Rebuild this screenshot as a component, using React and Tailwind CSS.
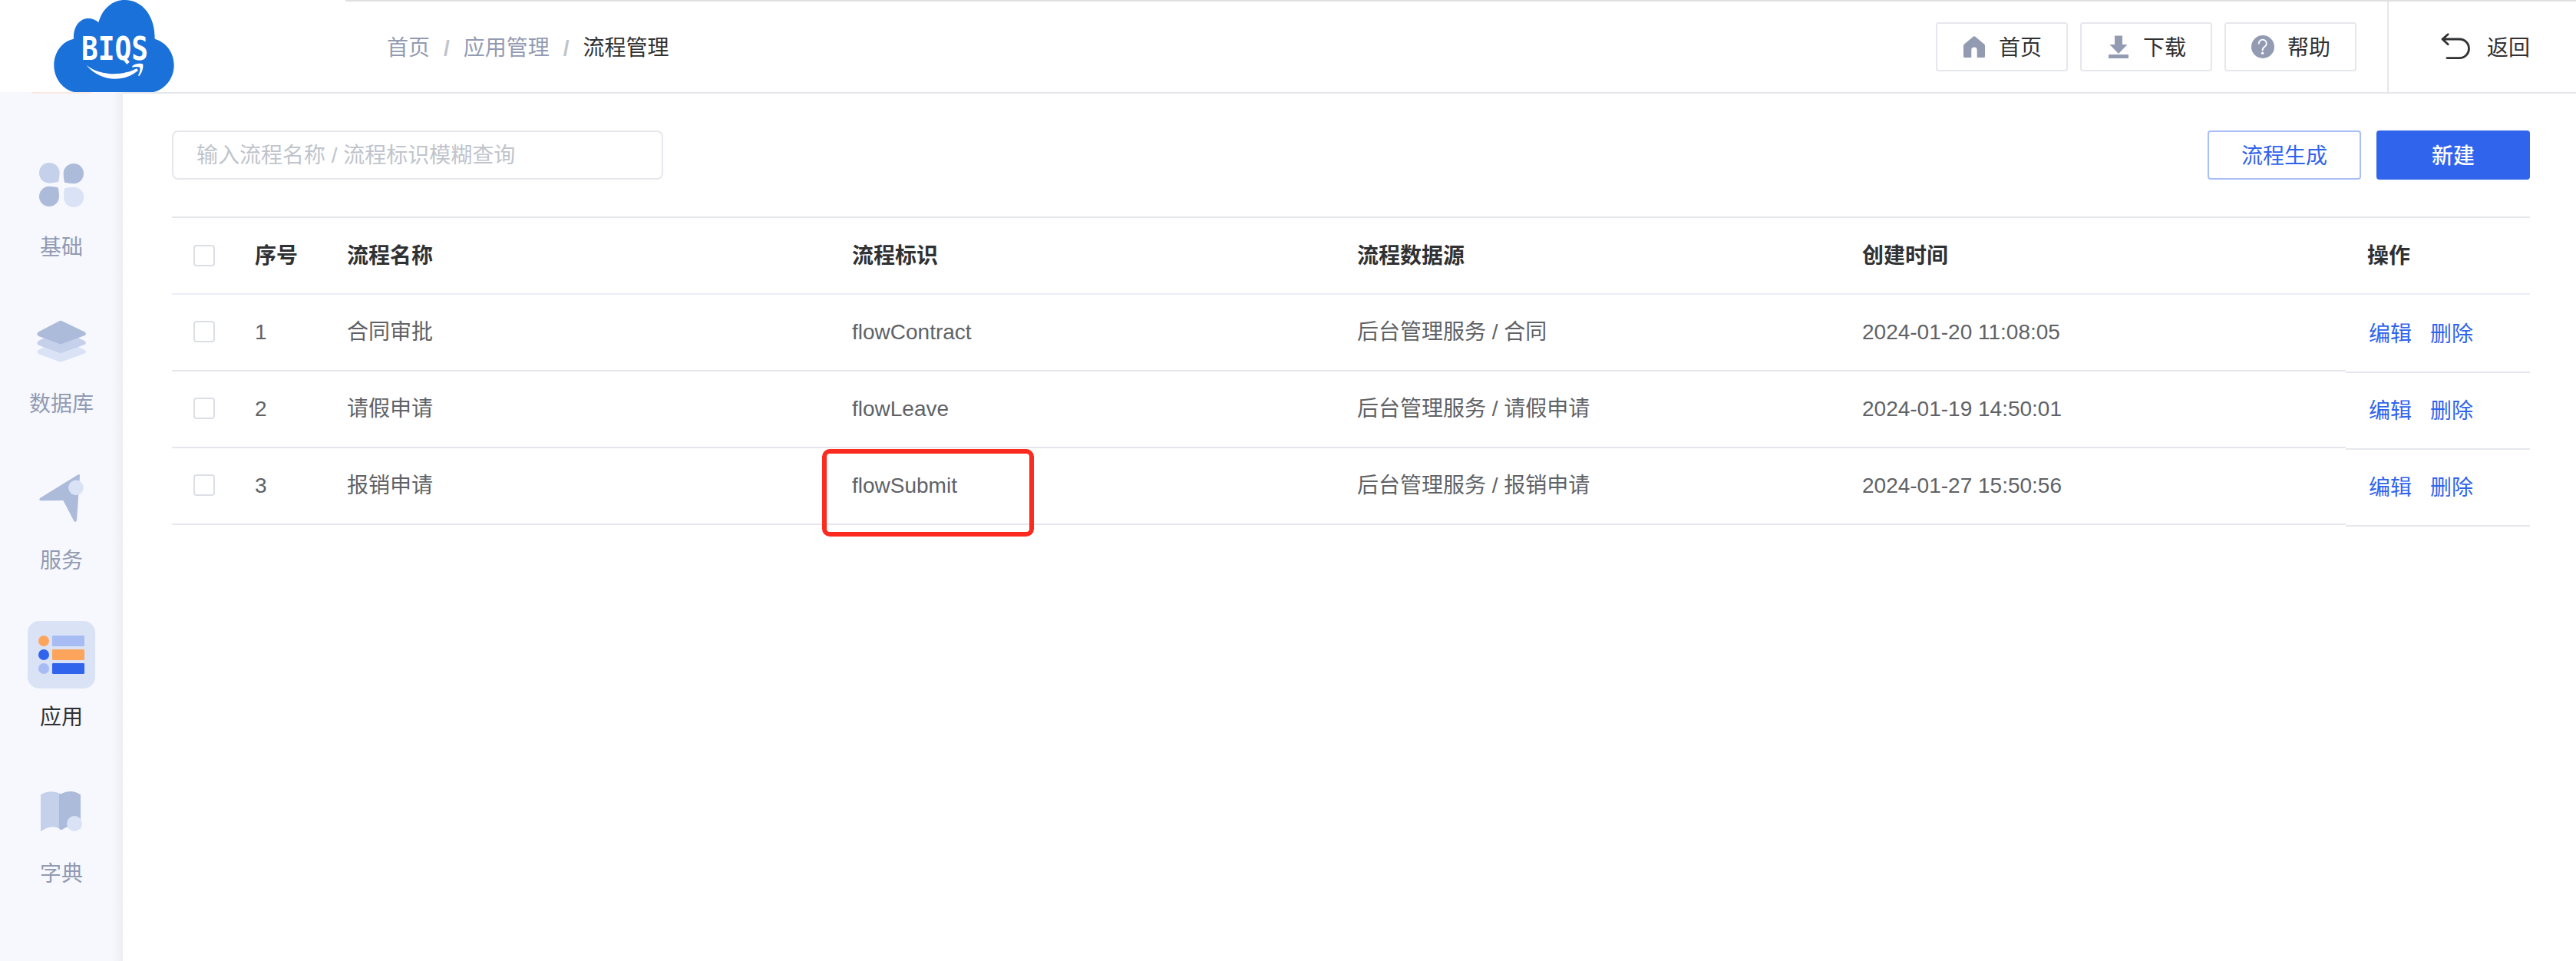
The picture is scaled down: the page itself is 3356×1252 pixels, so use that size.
import React, { useState } from "react";

const menus = [
  { key: "base", label: "基础", icon: BaseIcon },
  { key: "database", label: "数据库", icon: DatabaseIcon },
  { key: "service", label: "服务", icon: ServiceIcon },
  { key: "app", label: "应用", icon: AppIcon },
  { key: "dict", label: "字典", icon: DictIcon },
];

const flows = [
  { id: 1, name: "合同审批", code: "flowContract", source: "后台管理服务 / 合同", time: "2024-01-20 11:08:05" },
  { id: 2, name: "请假申请", code: "flowLeave", source: "后台管理服务 / 请假申请", time: "2024-01-19 14:50:01" },
  { id: 3, name: "报销申请", code: "flowSubmit", source: "后台管理服务 / 报销申请", time: "2024-01-27 15:50:56", marked: true },
];

function Logo() {
  return (
    <svg className="block h-[120px] w-[230px] overflow-visible" viewBox="0 0 230 120">
      <g transform="scale(0.33333)" fill="#fff">
        <path
          fill="#1971d9"
          d="M290 360C245 350 211 306 211 255C211 204 243 161 288 152C286 103 312 72 345 72C361 72 375 78 385 88C401 32 440 0 488 0C556 0 606 62 605 152C650 165 680 206 680 255C680 306 645 350 600 360Z"
        />
        <path d="M337 254C392 297 478 298 534 268L540 275C484 324 392 320 337 254Z" />
        <path d="M517 258C530 247 550 247 559 251C561 268 553 288 543 298L540 295C546 283 549 272 547 263C540 260 528 260 517 263Z" />
      </g>
      <text
        x="106"
        y="78"
        textLength="87"
        lengthAdjust="spacingAndGlyphs"
        fill="#fff"
        className="font-['DejaVu_Sans_Mono',monospace] text-[43px] leading-none font-bold"
      >
        BIQS
      </text>
    </svg>
  );
}

function BaseIcon() {
  return (
    <svg className="size-[88px]" viewBox="0 0 264 264">
      <path fill="#c5d1ea" d="M84 45C108 45 125 62 125 85Q124 105 120 120Q104 124 84 125C62 125 45 108 45 85C45 62 62 45 84 45Z" />
      <path fill="#adbbdb" d="M180 48C202 48 219 65 219 87C219 109 202 127 180 127Q160 126 144 122Q140 105 140 87C140 65 158 48 180 48Z" />
      <path fill="#adbbdb" d="M84 137Q103 138 119 142Q123 160 123 177C123 199 106 216 84 216C62 216 45 199 45 177C45 155 62 137 84 137Z" />
      <path fill="#dae3f6" d="M180 140C202 140 220 157 220 179C220 201 202 219 180 219C158 219 141 201 141 179Q141 160 144 145Q160 141 180 140Z" />
    </svg>
  );
}

function DatabaseIcon() {
  const layer = "M125 51Q129 49 133 51L222 94Q234 102 222 109L133 141Q129 143 125 141L43 111Q31 103 43 94Z";
  return (
    <svg className="size-[88px]" viewBox="0 0 264 264">
      <path fill="#dae3f6" transform="translate(0 70)" d={layer} />
      <path fill="#c5d1ea" transform="translate(0 35)" d={layer} />
      <path fill="#adbbdb" d={layer} />
    </svg>
  );
}

function ServiceIcon() {
  return (
    <svg className="size-[88px]" viewBox="0 0 264 264">
      <path fill="#adbbdb" d="M195 41Q204 36 204 45L192 219Q187 229 181 221L139 141L51 142Q42 138 49 131Z" />
      <circle cx="189" cy="91" r="29.5" fill="#dae3f6" />
    </svg>
  );
}

function AppIcon() {
  return (
    <svg className="size-[88px]" viewBox="0 0 264 264">
      <circle cx="63" cy="78" r="21" fill="#fda55d" />
      <circle cx="63" cy="132" r="21" fill="#3164ed" />
      <circle cx="63" cy="186" r="21" fill="#a8bcf4" />
      <rect x="96" y="57" width="126" height="42" rx="4" fill="#a8bcf4" />
      <rect x="96" y="111" width="126" height="42" rx="4" fill="#fda55d" />
      <rect x="96" y="165" width="126" height="42" rx="4" fill="#3164ed" />
    </svg>
  );
}

function DictIcon() {
  return (
    <svg className="size-[88px]" viewBox="0 0 264 264">
      <path fill="#c5d1ea" d="M51 67Q90 44 129 64V205L123 199Q90 182 51 211Z" />
      <path fill="#adbbdb" d="M123 64H130Q170 42 207 67V200Q165 180 134 204H129L123 199Z" />
      <circle cx="183" cy="180" r="30" fill="#dae3f6" />
    </svg>
  );
}

function HomeIcon() {
  return (
    <svg className="size-8" viewBox="0 0 32 32">
      <path
        fill="#929bb2"
        d="M15 2.6Q16 1.7 17 2.6L29 12.4Q30 13.3 30 14.6V28.5Q30 30 28.5 30H19.7V20.2A3.7 3.7 0 0 0 12.3 20.2V30H3.5Q2 30 2 28.5V14.6Q2 13.3 3 12.4Z"
      />
    </svg>
  );
}

function DownloadIcon() {
  return (
    <svg className="size-8" viewBox="0 0 32 32">
      <path fill="#929bb2" d="M11 1.5H21V13H27.5L16 25L4.5 13H11ZM3 26H29V31H3Z" />
    </svg>
  );
}

function HelpIcon() {
  return (
    <svg className="size-8" viewBox="0 0 32 32">
      <circle cx="16" cy="16" r="15" fill="#929bb2" />
      <path d="M10.8 11.8A5 5 0 1 1 18.8 15.6Q15.6 17.6 15.6 20.4" fill="none" stroke="#fff" strokeWidth="1.8" strokeLinecap="round" />
      <circle cx="15.6" cy="24.3" r="1.7" fill="#fff" />
    </svg>
  );
}

function BackIcon() {
  return (
    <svg className="size-10" viewBox="0 0 40 40" fill="none" stroke="#303133" strokeWidth="2.8" strokeLinecap="round" strokeLinejoin="round">
      <path d="M9.2 3.8L2 10L9.2 16.8M2 10H24.2A12.3 12.3 0 0 1 24.2 34.6H8" />
    </svg>
  );
}

function HeaderButton({ icon: Icon, children }) {
  return (
    <button className="flex h-16 items-center gap-4 rounded-[4px] border-2 border-[#e6e7ec] px-8 whitespace-nowrap text-[#303133]">
      <Icon />
      <span className="pt-[3px]">{children}</span>
    </button>
  );
}

function Checkbox() {
  return <span className="mb-0.5 size-7 shrink-0 rounded-[4px] border-2 border-[#dcdfe6] bg-white" />;
}

const rowGrid = "grid h-[100px] grid-cols-[80px_120px_repeat(4,minmax(0,1fr))_240px]";
const cell = "flex h-[100px] items-center border-b-2 border-[#e6e7ec] px-7";
const checkCell = "flex h-[100px] items-center justify-center border-b-2 border-[#e6e7ec] pl-1";

const App = () => {
  const [active, setActive] = useState("app");

  return (
    <div className="flex h-[1252px] w-full flex-col overflow-hidden bg-white font-['Liberation_Sans','Noto_Sans_CJK_SC',sans-serif] text-[28px] leading-10 text-[#606266]">
      {/* Top bar */}
      <header className="flex h-[120px] shrink-0">
        <div className="w-[450px]">
          <Logo />
        </div>
        <div className="flex flex-1 items-center border-t-2 border-[#e0e0e0]">
          <nav className="flex pt-[3px] pl-[54px] text-[#929bb2]">
            <span>首页</span>
            <span className="mx-[18px] font-bold text-[#c0c4cc]">/</span>
            <span>应用管理</span>
            <span className="mx-[18px] font-bold text-[#c0c4cc]">/</span>
            <span className="text-[#303133]">流程管理</span>
          </nav>
          <div className="ml-auto flex gap-4 pr-10">
            <HeaderButton icon={HomeIcon}>首页</HeaderButton>
            <HeaderButton icon={DownloadIcon}>下载</HeaderButton>
            <HeaderButton icon={HelpIcon}>帮助</HeaderButton>
          </div>
          <button className="flex h-full items-center gap-5 border-l-2 border-[#e6e7ec] pr-[60px] pl-[68px] text-[#303133]">
            <BackIcon />
            <span className="pt-[3px]">返回</span>
          </button>
        </div>
      </header>

      <div className="flex flex-1">
        {/* Side menu */}
        <aside className="relative flex w-40 flex-col items-center gap-[58px] bg-[linear-gradient(to_right,#f6f8fe_146px,#edeef2_160px)] pt-[77px]">
          <span className="absolute top-0 left-[41px] h-0.5 w-[78px] rounded-b-sm bg-[#fbe9e3]" />
          {menus.map(({ key, label, icon: Icon }) => (
            <button key={key} onClick={() => setActive(key)} className="flex flex-col items-center gap-[18px]">
              <span className={active === key ? "rounded-[15px] bg-[#dae3f6]" : "rounded-[15px]"}>
                <Icon />
              </span>
              <span className={active === key ? "text-[#303133]" : "text-[#929bb2]"}>{label}</span>
            </button>
          ))}
        </aside>

        <main className="flex-1 border-t-2 border-[#e6e7ec] pt-12 pr-[60px] pl-16">
          <div className="flex items-center justify-between">
            <input
              className="h-16 w-[640px] rounded-lg border-2 border-[#e6e7ec] px-[30px] pt-0.5 outline-none placeholder:text-[#c0c4cc]"
              placeholder="输入流程名称 / 流程标识模糊查询"
            />
            <div className="flex gap-5">
              <button className="h-16 w-[200px] rounded-[4px] border-2 border-[#a9bdf8] pt-[3px] text-[#3164ed]">流程生成</button>
              <button className="h-16 w-[200px] rounded-[4px] bg-[#3164ed] pt-[3px] font-medium text-white">新建</button>
            </div>
          </div>

          {/* Flow table */}
          <div className="mt-12 border-t-2 border-[#e6e7ec]">
            <div className="grid h-[100px] grid-cols-[80px_120px_repeat(4,minmax(0,1fr))_240px] items-center border-b-2 border-[#ebeef8] pt-px font-bold text-[#303133]">
              <div className="flex justify-center pl-1">
                <Checkbox />
              </div>
              <div className="px-7">序号</div>
              <div className="px-7">流程名称</div>
              <div className="px-7">流程标识</div>
              <div className="px-7">流程数据源</div>
              <div className="px-7">创建时间</div>
              <div className="px-7">操作</div>
            </div>
            {flows.map((flow) => (
              <div key={flow.id} className={rowGrid}>
                <div className={checkCell}>
                  <Checkbox />
                </div>
                <div className={cell}>{flow.id}</div>
                <div className={cell}>{flow.name}</div>
                <div className={`${cell} relative`}>
                  {flow.code}
                  {flow.marked && (
                    <span className="absolute top-px -left-[11px] h-[114px] w-[276px] rounded-[10px] border-[6px] border-[#fc2a1f]" />
                  )}
                </div>
                <div className={cell}>{flow.source}</div>
                <div className={cell}>{flow.time}</div>
                {/* action cell is slightly taller than the rest of the row */}
                <div className="flex h-[102px] items-center gap-6 border-b-2 border-[#e6e7ec] pt-[3px] pl-[30px] text-[#3164ed]">
                  <button>编辑</button>
                  <button>删除</button>
                </div>
              </div>
            ))}
          </div>
        </main>
      </div>
    </div>
  );
};

export default App;
